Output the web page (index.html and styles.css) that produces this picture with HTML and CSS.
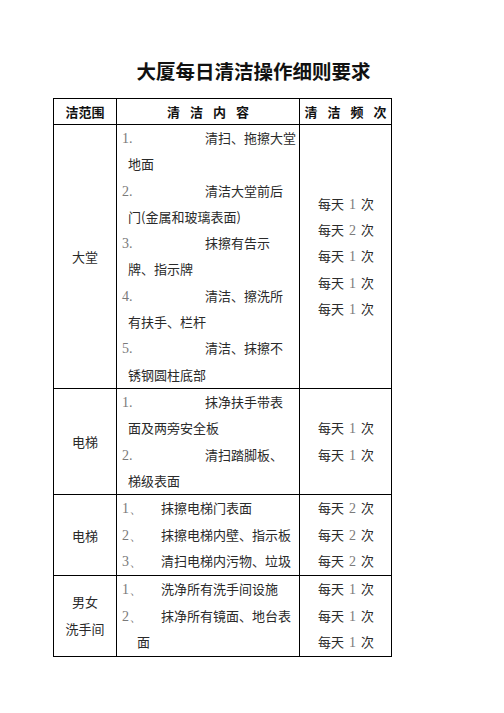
FILE: index.html
```html
<!DOCTYPE html>
<html lang="zh">
<head>
<meta charset="utf-8">
<link rel="stylesheet" href="styles.css">
</head>
<body>
<div class="page">
  <h1 class="title">大厦每日清洁操作细则要求</h1>
  <table class="grid">
    <colgroup>
      <col class="c1"><col class="c2"><col class="c3">
    </colgroup>
    <tr class="head">
      <th>洁范围</th>
      <th class="spaced">清 洁 内 容</th>
      <th class="spaced">清 洁 频 次</th>
    </tr>
    <tr class="r1">
      <td class="area">大堂</td>
      <td class="content">
        <div class="ln"><span class="num wide">1.</span>清扫、拖擦大堂</div>
        <div class="ln cont">地面</div>
        <div class="ln"><span class="num wide">2.</span>清洁大堂前后</div>
        <div class="ln cont">门(金属和玻璃表面)</div>
        <div class="ln"><span class="num wide">3.</span>抹擦有告示</div>
        <div class="ln cont">牌、指示牌</div>
        <div class="ln"><span class="num wide">4.</span>清洁、擦洗所</div>
        <div class="ln cont">有扶手、栏杆</div>
        <div class="ln"><span class="num wide">5.</span>清洁、抹擦不</div>
        <div class="ln cont">锈钢圆柱底部</div>
      </td>
      <td class="freq">
        <div class="ln">每天 <span class="d">1</span> 次</div>
        <div class="ln">每天 <span class="d">2</span> 次</div>
        <div class="ln">每天 <span class="d">1</span> 次</div>
        <div class="ln">每天 <span class="d">1</span> 次</div>
        <div class="ln">每天 <span class="d">1</span> 次</div>
      </td>
    </tr>
    <tr class="r2">
      <td class="area">电梯</td>
      <td class="content">
        <div class="ln"><span class="num wide">1.</span>抹净扶手带表</div>
        <div class="ln cont">面及两旁安全板</div>
        <div class="ln"><span class="num wide">2.</span>清扫踏脚板、</div>
        <div class="ln cont">梯级表面</div>
      </td>
      <td class="freq">
        <div class="ln">每天 <span class="d">1</span> 次</div>
        <div class="ln">每天 <span class="d">1</span> 次</div>
      </td>
    </tr>
    <tr class="r3">
      <td class="area">电梯</td>
      <td class="content">
        <div class="ln"><span class="num short">1、</span>抹擦电梯门表面</div>
        <div class="ln"><span class="num short">2、</span>抹擦电梯内壁、指示板</div>
        <div class="ln"><span class="num short">3、</span>清扫电梯内污物、垃圾</div>
      </td>
      <td class="freq">
        <div class="ln">每天 <span class="d">2</span> 次</div>
        <div class="ln">每天 <span class="d">2</span> 次</div>
        <div class="ln">每天 <span class="d">2</span> 次</div>
      </td>
    </tr>
    <tr class="r4">
      <td class="area"><div class="ln">男女</div><div class="ln">洗手间</div></td>
      <td class="content">
        <div class="ln"><span class="num short">1、</span>洗净所有洗手间设施</div>
        <div class="ln"><span class="num short">2、</span>抹净所有镜面、地台表</div>
        <div class="ln cont2">面</div>
      </td>
      <td class="freq">
        <div class="ln">每天 <span class="d">1</span> 次</div>
        <div class="ln">每天 <span class="d">1</span> 次</div>
        <div class="ln">每天 <span class="d">1</span> 次</div>
      </td>
    </tr>
  </table>
</div>
</body>
</html>
```

FILE: styles.css
```css
html, body {
  margin: 0;
  padding: 0;
  background: #ffffff;
}

body {
  font-family: "Noto Sans CJK SC", "Noto Sans", sans-serif;
  color: #2a2a2a;
}

.page {
  width: 504px;
  height: 713px;
  padding-top: 58px;
  box-sizing: border-box;
}

.title {
  margin: 0 0 0 3px;
  text-align: center;
  font-size: 19.5px;
  line-height: 26px;
  font-weight: 700;
  color: #111;
}

.grid {
  margin: 14px 0 0 53px;
  border-collapse: collapse;
  table-layout: fixed;
  width: 338px;
  font-size: 13px;
}

.c1 { width: 63px; }
.c2 { width: 183px; }
.c3 { width: 92px; }

.grid th,
.grid td {
  border: 1px solid #000;
  padding: 0;
  vertical-align: middle;
}

.head th {
  height: 25px;
  font-weight: 700;
  font-size: 13px;
  color: #111;
  text-align: center;
}

.head th.spaced {
  word-spacing: 7px;
}

.area {
  text-align: center;
}

.grid td.content {
  padding-left: 5px;
}

.ln {
  height: 26.3px;
  line-height: 26.3px;
  white-space: nowrap;
  overflow: visible;
}

.r3 .ln, .r4 .ln {
  height: 26.6px;
  line-height: 26.6px;
}

.cont {
  padding-left: 6px;
}

.cont2 {
  padding-left: 15px;
}

.num {
  display: inline-block;
  font-family: "Liberation Serif", serif;
  color: #7a7a7a;
  font-size: 14px;
  line-height: 1;
}

.num.wide { width: 83px; }
.num.short { width: 39px; }

.grid td.freq {
  text-align: center;
  padding-left: 1px;
  word-spacing: 2px;
}

.d {
  font-family: "Liberation Serif", serif;
  color: #7a7a7a;
  font-size: 14px;
}
```
